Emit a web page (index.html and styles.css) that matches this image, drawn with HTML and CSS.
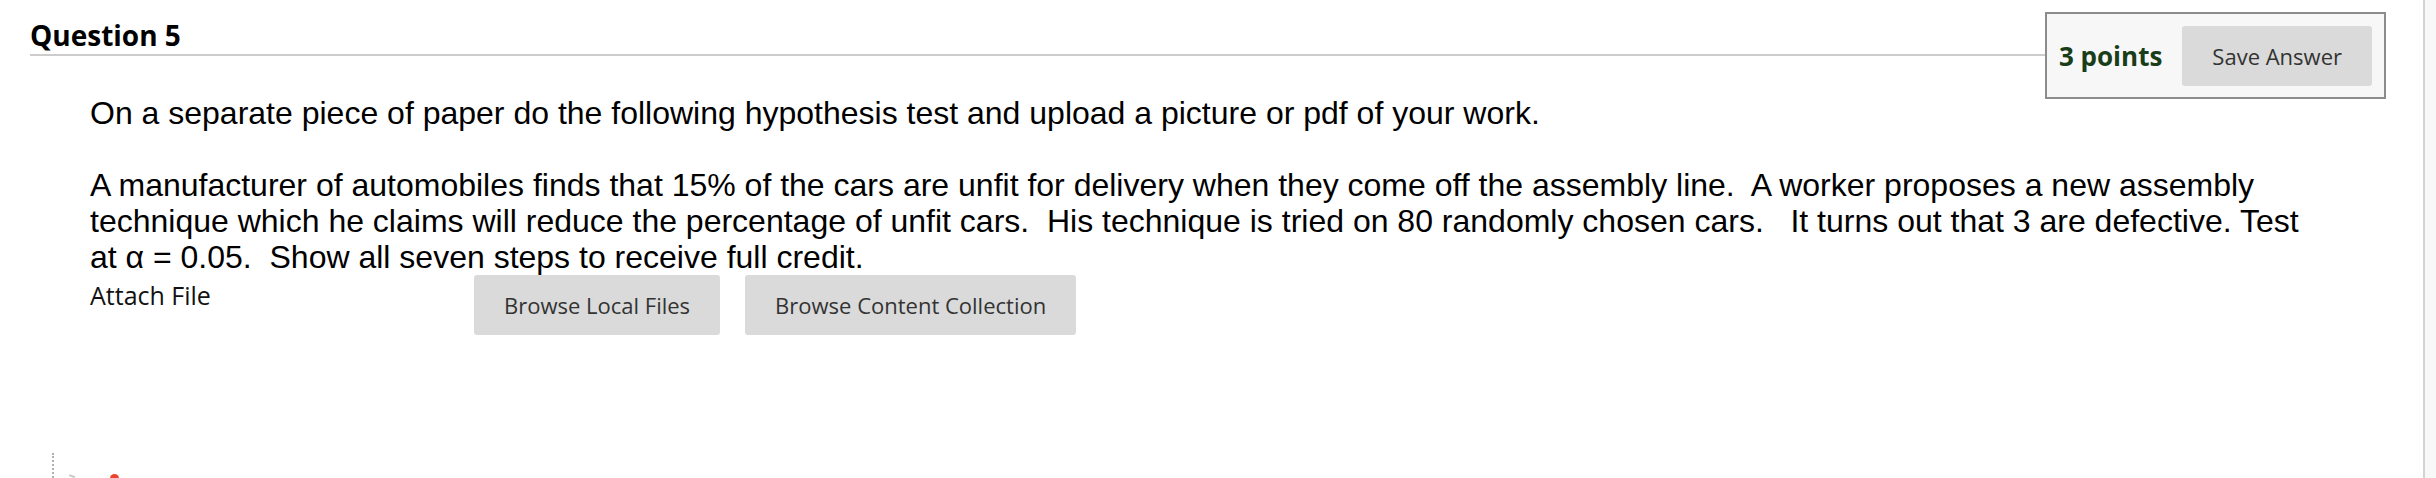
FILE: index.html
```html
<!DOCTYPE html>
<html lang="en">
<head>
<meta charset="utf-8">
<title>Question 5</title>
<link rel="stylesheet" href="styles.css">
</head>
<body>
<div class="page">
  <main class="main">
    <section class="question">
      <div class="points-box">
        <span class="points">3 points</span>
        <button class="btn btn-save" type="button">Save Answer</button>
      </div>
      <h2 class="q-title">Question 5</h2>
      <div class="q-body">
        <p class="q-text">On a separate piece of paper do the following hypothesis test and upload a picture or pdf of your work.</p>
        <p class="q-text">A manufacturer of automobiles finds that 15% of the cars are unfit for delivery when they come off the assembly line.&nbsp; A worker proposes a new assembly<br>technique which he claims will reduce the percentage of unfit cars.&nbsp; His technique is tried on 80 randomly chosen cars.&nbsp;&nbsp; It turns out that 3 are defective. Test<br>at α = 0.05.&nbsp; Show all seven steps to receive full credit.</p>
        <div class="attach">
          <span class="attach-label">Attach File</span>
          <div class="attach-buttons">
            <button class="btn" type="button">Browse Local Files</button>
            <button class="btn" type="button">Browse Content Collection</button>
          </div>
        </div>
      </div>
    </section>
    <div class="next-question">
      <span class="next-mark"></span>
      <span class="next-dot"></span>
    </div>
  </main>
  <aside class="sidebar"></aside>
</div>
</body>
</html>
```

FILE: styles.css
```css
html, body {
  margin: 0;
  padding: 0;
  background: #ffffff;
}

body {
  font-family: "Open Sans", "Liberation Sans", sans-serif;
  color: #000;
}

.page {
  display: flex;
  height: 478px;
  overflow: hidden;
}

.main {
  flex: 1;
  padding: 12px 37px 0 30px;
  background: #ffffff;
}

.sidebar {
  width: 11px;
  border-left: 2px solid #d3d3d3;
  background: #f8f8f8;
}

.points-box {
  float: right;
  display: flex;
  align-items: center;
  gap: 20px;
  padding: 12px 12px 11px 12px;
  border: 2px solid #8c8c8c;
  background: #f7f7f7;
}

.points {
  font-size: 26px;
  font-weight: 700;
  color: #1a3d19;
}

.btn {
  font-family: "Open Sans", "Liberation Sans", sans-serif;
  font-size: 22px;
  color: #333333;
  background: #dadada;
  border: 0;
  border-radius: 3px;
  height: 60px;
  padding: 0 30px;
  margin: 0;
}

.q-title {
  margin: 0;
  padding-top: 5px;
  font-size: 28px;
  font-weight: 700;
  line-height: 37px;
  border-bottom: 2px solid #cccccc;
  color: #000;
}

.q-body {
  margin-left: 60px;
  padding-top: 39px;
}

.q-text {
  margin: 0;
  font-family: "Liberation Sans", Arial, Helvetica, sans-serif;
  font-size: 32px;
  line-height: 36px;
  color: #000;
}

.q-text + .q-text {
  margin-top: 36px;
}

.attach {
  display: flex;
  align-items: flex-start;
}

.attach-label {
  width: 384px;
  padding-top: 3px;
  font-size: 25px;
  line-height: 34px;
  color: #111;
}

.attach-buttons {
  display: flex;
  gap: 25px;
}

.next-question {
  display: flex;
  align-items: flex-start;
  margin-top: 118px;
  margin-left: 22px;
  height: 40px;
  border-left: 2px dotted #b0b0b0;
}

.next-mark {
  width: 6px;
  height: 6px;
  margin: 22px 0 0 14px;
  border-top: 2px solid #c8c8c8;
  transform: rotate(20deg);
}

.next-dot {
  width: 9px;
  height: 9px;
  margin: 21px 0 0 36px;
  border-radius: 50%;
  background: #e8452c;
}
```
